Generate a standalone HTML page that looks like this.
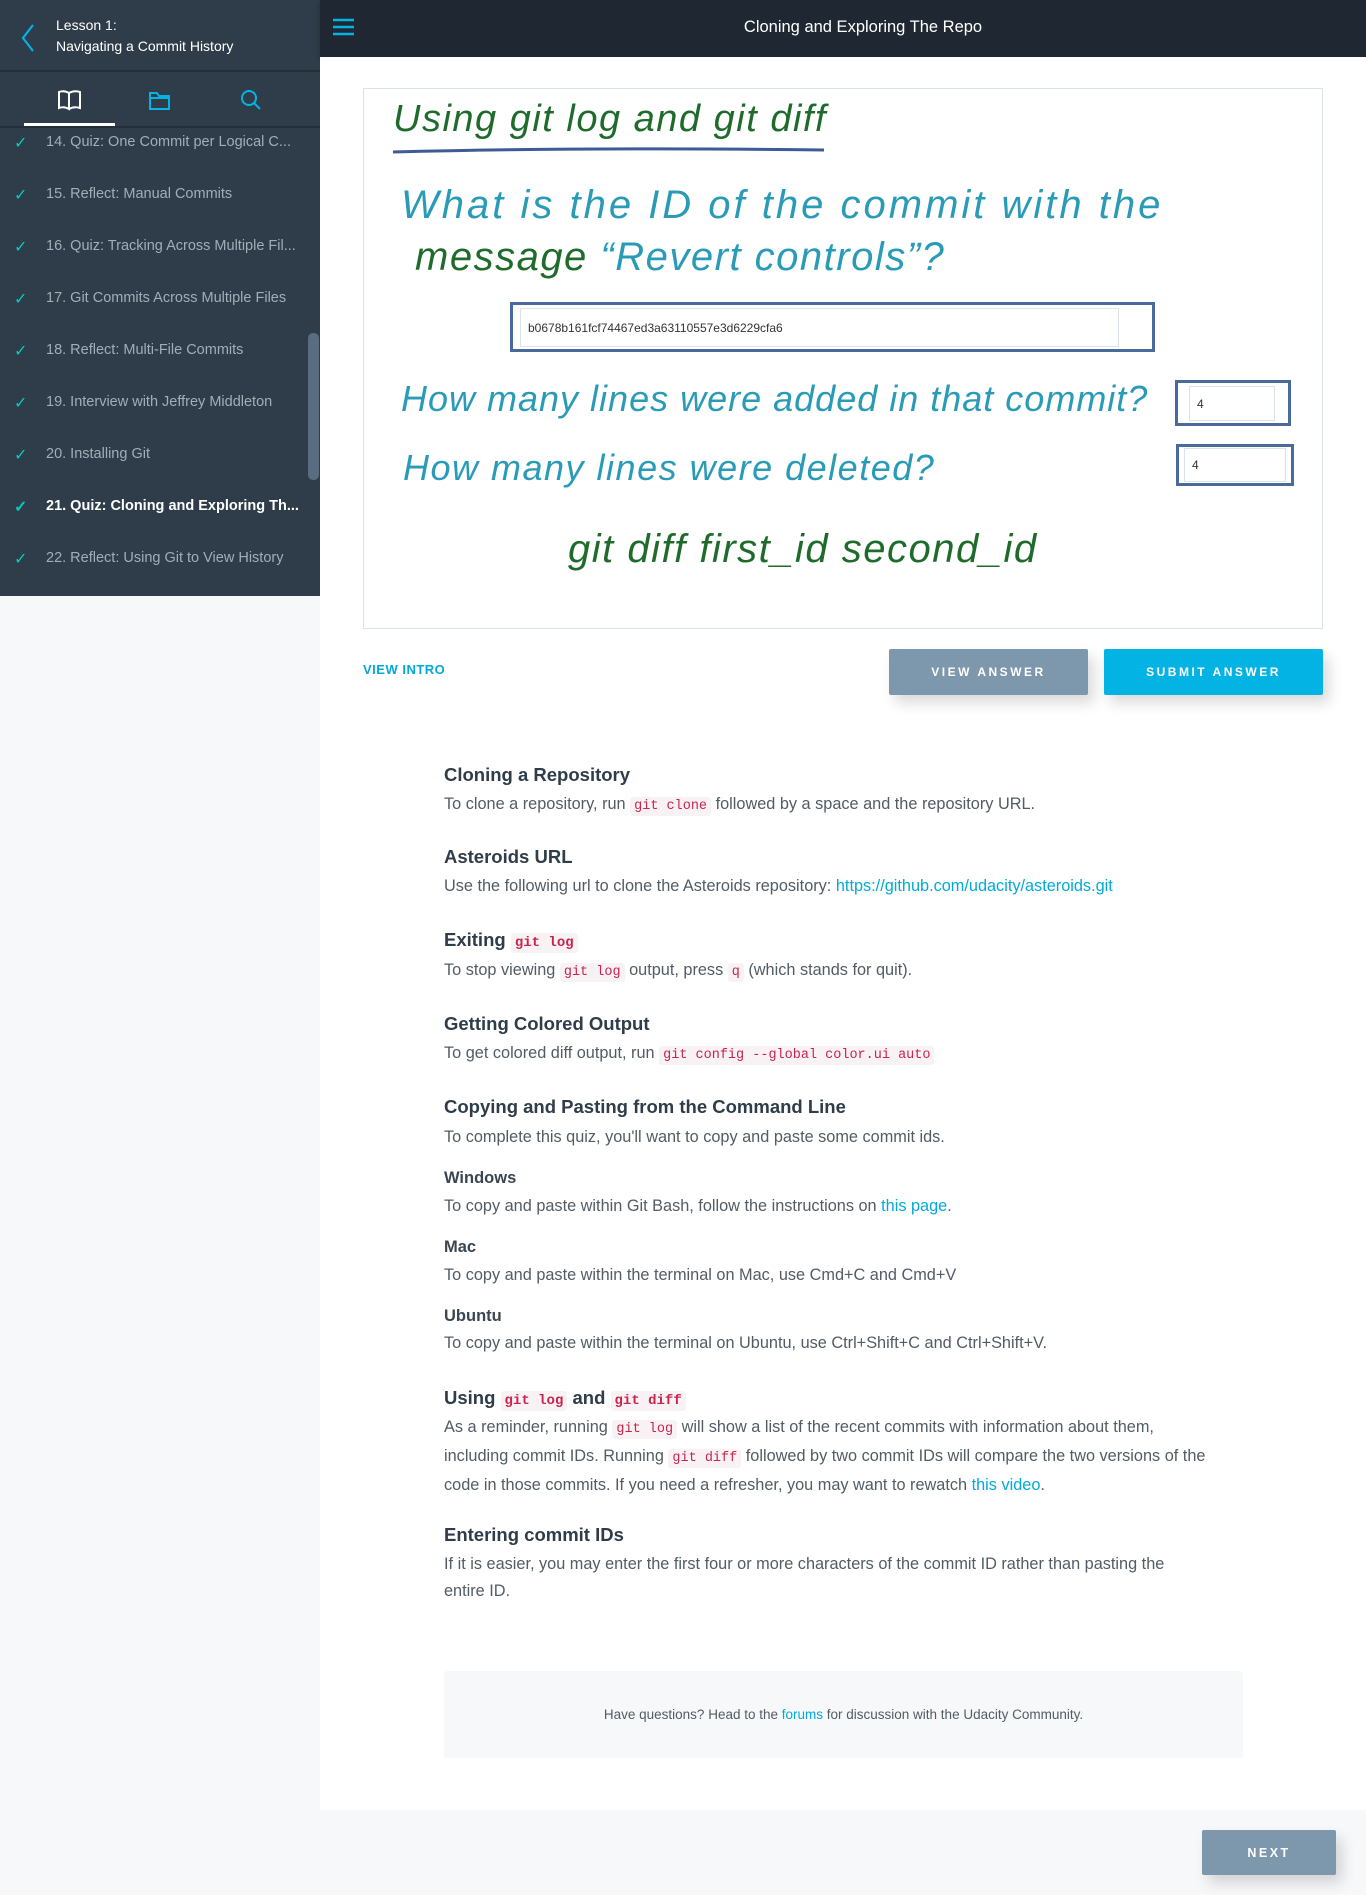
<!DOCTYPE html>
<html><head><meta charset="utf-8"><style>
*{box-sizing:border-box;margin:0;padding:0}
body{width:1366px;height:1895px;position:relative;background:#f7f8fa;font-family:"Liberation Sans",sans-serif;overflow:hidden}
.a{position:absolute;white-space:nowrap}
#side{position:absolute;left:0;top:0;width:320px;height:596px;background:#2e3d49}
#top{position:absolute;left:320px;top:0;width:1046px;height:57px;background:#1f2832;box-shadow:0 2px 6px rgba(0,0,0,.25)}
#main{position:absolute;left:320px;top:57px;width:1046px;height:1753px;background:#fff}
.it{position:absolute;left:0;width:320px;height:52px;color:#a3adb6;font-size:14.5px}
.it .c{position:absolute;left:14px;top:-7px;color:#02ccba;font-size:16px}
.it .t{position:absolute;left:46px;top:-6px}
.hw{position:absolute;white-space:nowrap;font-family:"Liberation Sans",sans-serif;font-style:italic;letter-spacing:1.5px}
.b{color:#2a9bb7}.g{color:#1f6b2c}
.inp{position:absolute;border:3px solid #4a6a9c;background:#fff}
.inp div{position:absolute;background:#fff;border:1px solid #dde3ea;font-size:12px;color:#333;padding-left:7px;display:flex;align-items:center}
.btn{position:absolute;height:46px;color:#fff;font-size:12px;font-weight:bold;letter-spacing:2.5px;display:flex;align-items:center;justify-content:center;border-radius:2px;box-shadow:6px 8px 14px rgba(0,0,0,.15)}
h3{position:absolute;left:444px;font-size:18.5px;color:#2e3d49;white-space:nowrap;font-weight:600}
h4{position:absolute;left:444px;font-size:16.5px;font-weight:bold;color:#3a4650;white-space:nowrap}
p{position:absolute;left:444px;font-size:16.3px;color:#525c65;white-space:nowrap;line-height:27px}
code{font-family:"Liberation Mono",monospace;font-size:13.5px;color:#c7254e;background:#f9f2f4;padding:2px 4px;border-radius:3px}
h3 code{font-weight:bold;font-size:14px}
a{color:#02a9d9;text-decoration:none}
</style></head><body>
<div id="side">
 <svg class="a" style="left:18px;top:22px" width="20" height="32"><path d="M15 3 L5 16 L15 29" stroke="#02b3e4" stroke-width="2.2" fill="none"/></svg>
 <div class="a" style="left:56px;top:17px;color:#fff;font-size:14px">Lesson 1:</div>
 <div class="a" style="left:56px;top:38px;color:#fff;font-size:14px">Navigating a Commit History</div>
 <div class="a" style="left:0;top:70px;width:320px;height:2px;background:#222e38"></div>
 <svg class="a" style="left:57px;top:89px" width="26" height="22"><path d="M2 3 Q7 1 12 4 L12 20 Q7 17 2 19 Z M12 4 Q17 1 23 3 L23 19 Q17 17 12 20" stroke="#fff" stroke-width="2" fill="none"/></svg>
 <svg class="a" style="left:148px;top:89px" width="24" height="22"><path d="M2 4 L9 4 L11 7 L21 7 L21 20 L2 20 Z M2 9 L21 9" stroke="#02b3e4" stroke-width="2" fill="none"/></svg>
 <svg class="a" style="left:239px;top:88px" width="24" height="24"><circle cx="10" cy="10" r="7" stroke="#02b3e4" stroke-width="2" fill="none"/><path d="M15 15 L21 21" stroke="#02b3e4" stroke-width="2"/></svg>
 <div class="a" style="left:24px;top:123px;width:91px;height:3px;background:#fff"></div>
 <div class="a" style="left:0;top:126px;width:320px;height:2px;background:#222e38"></div>
 <div class="a" style="left:308px;top:333px;width:11px;height:147px;background:#5a6d80;border-radius:5px"></div>
 <div class="it" style="top:140px"><span class="c">✓</span><span class="t">14. Quiz: One Commit per Logical C...</span></div>
 <div class="it" style="top:192px"><span class="c">✓</span><span class="t">15. Reflect: Manual Commits</span></div>
 <div class="it" style="top:244px"><span class="c">✓</span><span class="t">16. Quiz: Tracking Across Multiple Fil...</span></div>
 <div class="it" style="top:296px"><span class="c">✓</span><span class="t">17. Git Commits Across Multiple Files</span></div>
 <div class="it" style="top:348px"><span class="c">✓</span><span class="t">18. Reflect: Multi-File Commits</span></div>
 <div class="it" style="top:400px"><span class="c">✓</span><span class="t">19. Interview with Jeffrey Middleton</span></div>
 <div class="it" style="top:452px"><span class="c">✓</span><span class="t">20. Installing Git</span></div>
 <div class="it" style="top:504px;color:#fff;font-weight:bold"><span class="c">✓</span><span class="t">21. Quiz: Cloning and Exploring Th...</span></div>
 <div class="it" style="top:556px"><span class="c">✓</span><span class="t">22. Reflect: Using Git to View History</span></div>
</div>
<div id="top">
 <svg class="a" style="left:13px;top:18px" width="22" height="18"><path d="M0 2H21M0 9H21M0 16H21" stroke="#02b3e4" stroke-width="2.5"/></svg>
 <div class="a" style="left:20px;width:1046px;text-align:center;top:18px;color:#fff;font-size:16.5px">Cloning and Exploring The Repo</div>
</div>
<div id="main"></div>
<div class="a" style="left:363px;top:88px;width:960px;height:541px;border:1px solid #dbe2e8;background:#fff"></div>
<div class="hw g" style="left:393px;top:98px;font-size:38px">Using git log and git diff</div>
<svg class="a" style="left:390px;top:143px" width="440" height="14"><path d="M3 9 Q200 4 434 7" stroke="#3d5b94" stroke-width="3" fill="none"/></svg>
<div class="hw b" style="left:401px;top:183px;font-size:40px;letter-spacing:3px">What is the ID of the commit with the</div>
<div class="hw b" style="left:415px;top:235px;font-size:40px"><span class="g">message</span> “Revert controls”?</div>
<div class="inp" style="left:510px;top:302px;width:645px;height:50px"><div style="left:7px;top:3px;width:599px;height:39px">b0678b161fcf74467ed3a63110557e3d6229cfa6</div></div>
<div class="hw b" style="left:401px;top:378px;font-size:36px;letter-spacing:1px">How many lines were added in that commit?</div>
<div class="inp" style="left:1175px;top:380px;width:116px;height:46px"><div style="left:11px;top:3px;width:86px;height:35px">4</div></div>
<div class="hw b" style="left:403px;top:447px;font-size:36px">How many lines were deleted?</div>
<div class="inp" style="left:1176px;top:444px;width:118px;height:42px"><div style="left:5px;top:1px;width:102px;height:34px">4</div></div>
<div class="hw g" style="left:568px;top:527px;font-size:40px">git diff  first_id  second_id</div>
<div class="a" style="left:363px;top:662px;color:#02a9d9;font-size:13px;font-weight:bold;letter-spacing:.5px">VIEW INTRO</div>
<div class="btn" style="left:889px;top:649px;width:199px;background:#7d97ad">VIEW ANSWER</div>
<div class="btn" style="left:1104px;top:649px;width:219px;background:#02b3e4">SUBMIT ANSWER</div>

<h3 style="top:764px">Cloning a Repository</h3>
<p style="top:791px">To clone a repository, run <code>git clone</code> followed by a space and the repository URL.</p>
<h3 style="top:846px">Asteroids URL</h3>
<p style="top:873px">Use the following url to clone the Asteroids repository: <a>https://github.com/udacity/asteroids.git</a></p>
<h3 style="top:929px">Exiting <code>git log</code></h3>
<p style="top:957px">To stop viewing <code>git log</code> output, press <code>q</code> (which stands for quit).</p>
<h3 style="top:1013px">Getting Colored Output</h3>
<p style="top:1040px">To get colored diff output, run <code>git config --global color.ui auto</code></p>
<h3 style="top:1096px">Copying and Pasting from the Command Line</h3>
<p style="top:1124px">To complete this quiz, you'll want to copy and paste some commit ids.</p>
<h4 style="top:1169px">Windows</h4>
<p style="top:1193px">To copy and paste within Git Bash, follow the instructions on <a>this page</a>.</p>
<h4 style="top:1238px">Mac</h4>
<p style="top:1262px">To copy and paste within the terminal on Mac, use Cmd+C and Cmd+V</p>
<h4 style="top:1307px">Ubuntu</h4>
<p style="top:1330px">To copy and paste within the terminal on Ubuntu, use Ctrl+Shift+C and Ctrl+Shift+V.</p>
<h3 style="top:1387px">Using <code>git log</code> and <code>git diff</code></h3>
<p style="top:1414px">As a reminder, running <code>git log</code> will show a list of the recent commits with information about them,<br>including commit IDs. Running <code>git diff</code> followed by two commit IDs will compare the two versions of the<br>code in those commits. If you need a refresher, you may want to rewatch <a>this video</a>.</p>
<h3 style="top:1524px">Entering commit IDs</h3>
<p style="top:1551px">If it is easier, you may enter the first four or more characters of the commit ID rather than pasting the<br>entire ID.</p>
<div class="a" style="left:444px;top:1671px;width:799px;height:87px;background:#f7f8fa;border-radius:3px;text-align:center;line-height:87px;font-size:13.5px;color:#525c65">Have questions? Head to the <a>forums</a> for discussion with the Udacity Community.</div>
<div class="btn" style="left:1202px;top:1830px;width:134px;height:45px;background:#7d97ad;font-size:12.5px">NEXT</div>
</body></html>
